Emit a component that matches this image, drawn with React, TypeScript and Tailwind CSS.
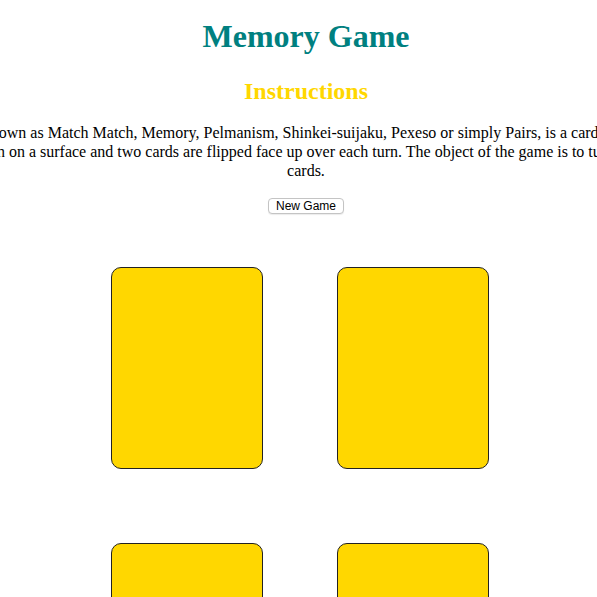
import { useState } from "react";

const INSTRUCTIONS =
  "Concentration, also known as Match Match, Memory, Pelmanism, Shinkei-suijaku, Pexeso or simply Pairs, is a card game in which all of the cards are laid face down on a surface and two cards are flipped face up over each turn. The object of the game is to turn over pairs of matching cards.";

// single face-down card
function Card({ onClick }: { onClick: () => void }) {
  return (
    <button
      type="button"
      onClick={onClick}
      className="h-[202px] w-[152px] rounded-[10px] border border-[#222] bg-[#ffd700]"
      aria-label="card"
    />
  );
}

export default function App() {
  const [cards, setCards] = useState([0, 1, 2, 3]);

  return (
    <div className="min-h-screen w-full overflow-hidden bg-white font-['Liberation_Serif',serif] text-black">
      {/* header */}
      <div className="flex flex-col items-center pl-[15px] text-center">
        <h1 className="mt-[18px] text-[32px] font-bold leading-[37px] text-[#008080]">
          Memory Game
        </h1>
        <h2 className="mt-[22px] text-[24px] font-bold leading-[28px] text-[#ffd700]">
          Instructions
        </h2>
        <p className="mt-[18px] w-[930px] shrink-0 text-[16px] leading-[19px]">
          {INSTRUCTIONS}
        </p>
        <button
          type="button"
          onClick={() => setCards([...cards].reverse())}
          className="mt-[18px] h-[16px] rounded-[4px] border border-[#c4c4c4] bg-white px-[7px] font-['Liberation_Sans',sans-serif] text-[12px] leading-[14px] shadow-[0_1px_1px_rgba(0,0,0,0.08)]"
        >
          New Game
        </button>
      </div>

      {/* board */}
      <div className="mt-[53px] flex justify-center pl-[3px]">
        <div className="grid grid-cols-2 gap-[74px]">
          {cards.map((c) => (
            <Card key={c} onClick={() => {}} />
          ))}
        </div>
      </div>
    </div>
  );
}
